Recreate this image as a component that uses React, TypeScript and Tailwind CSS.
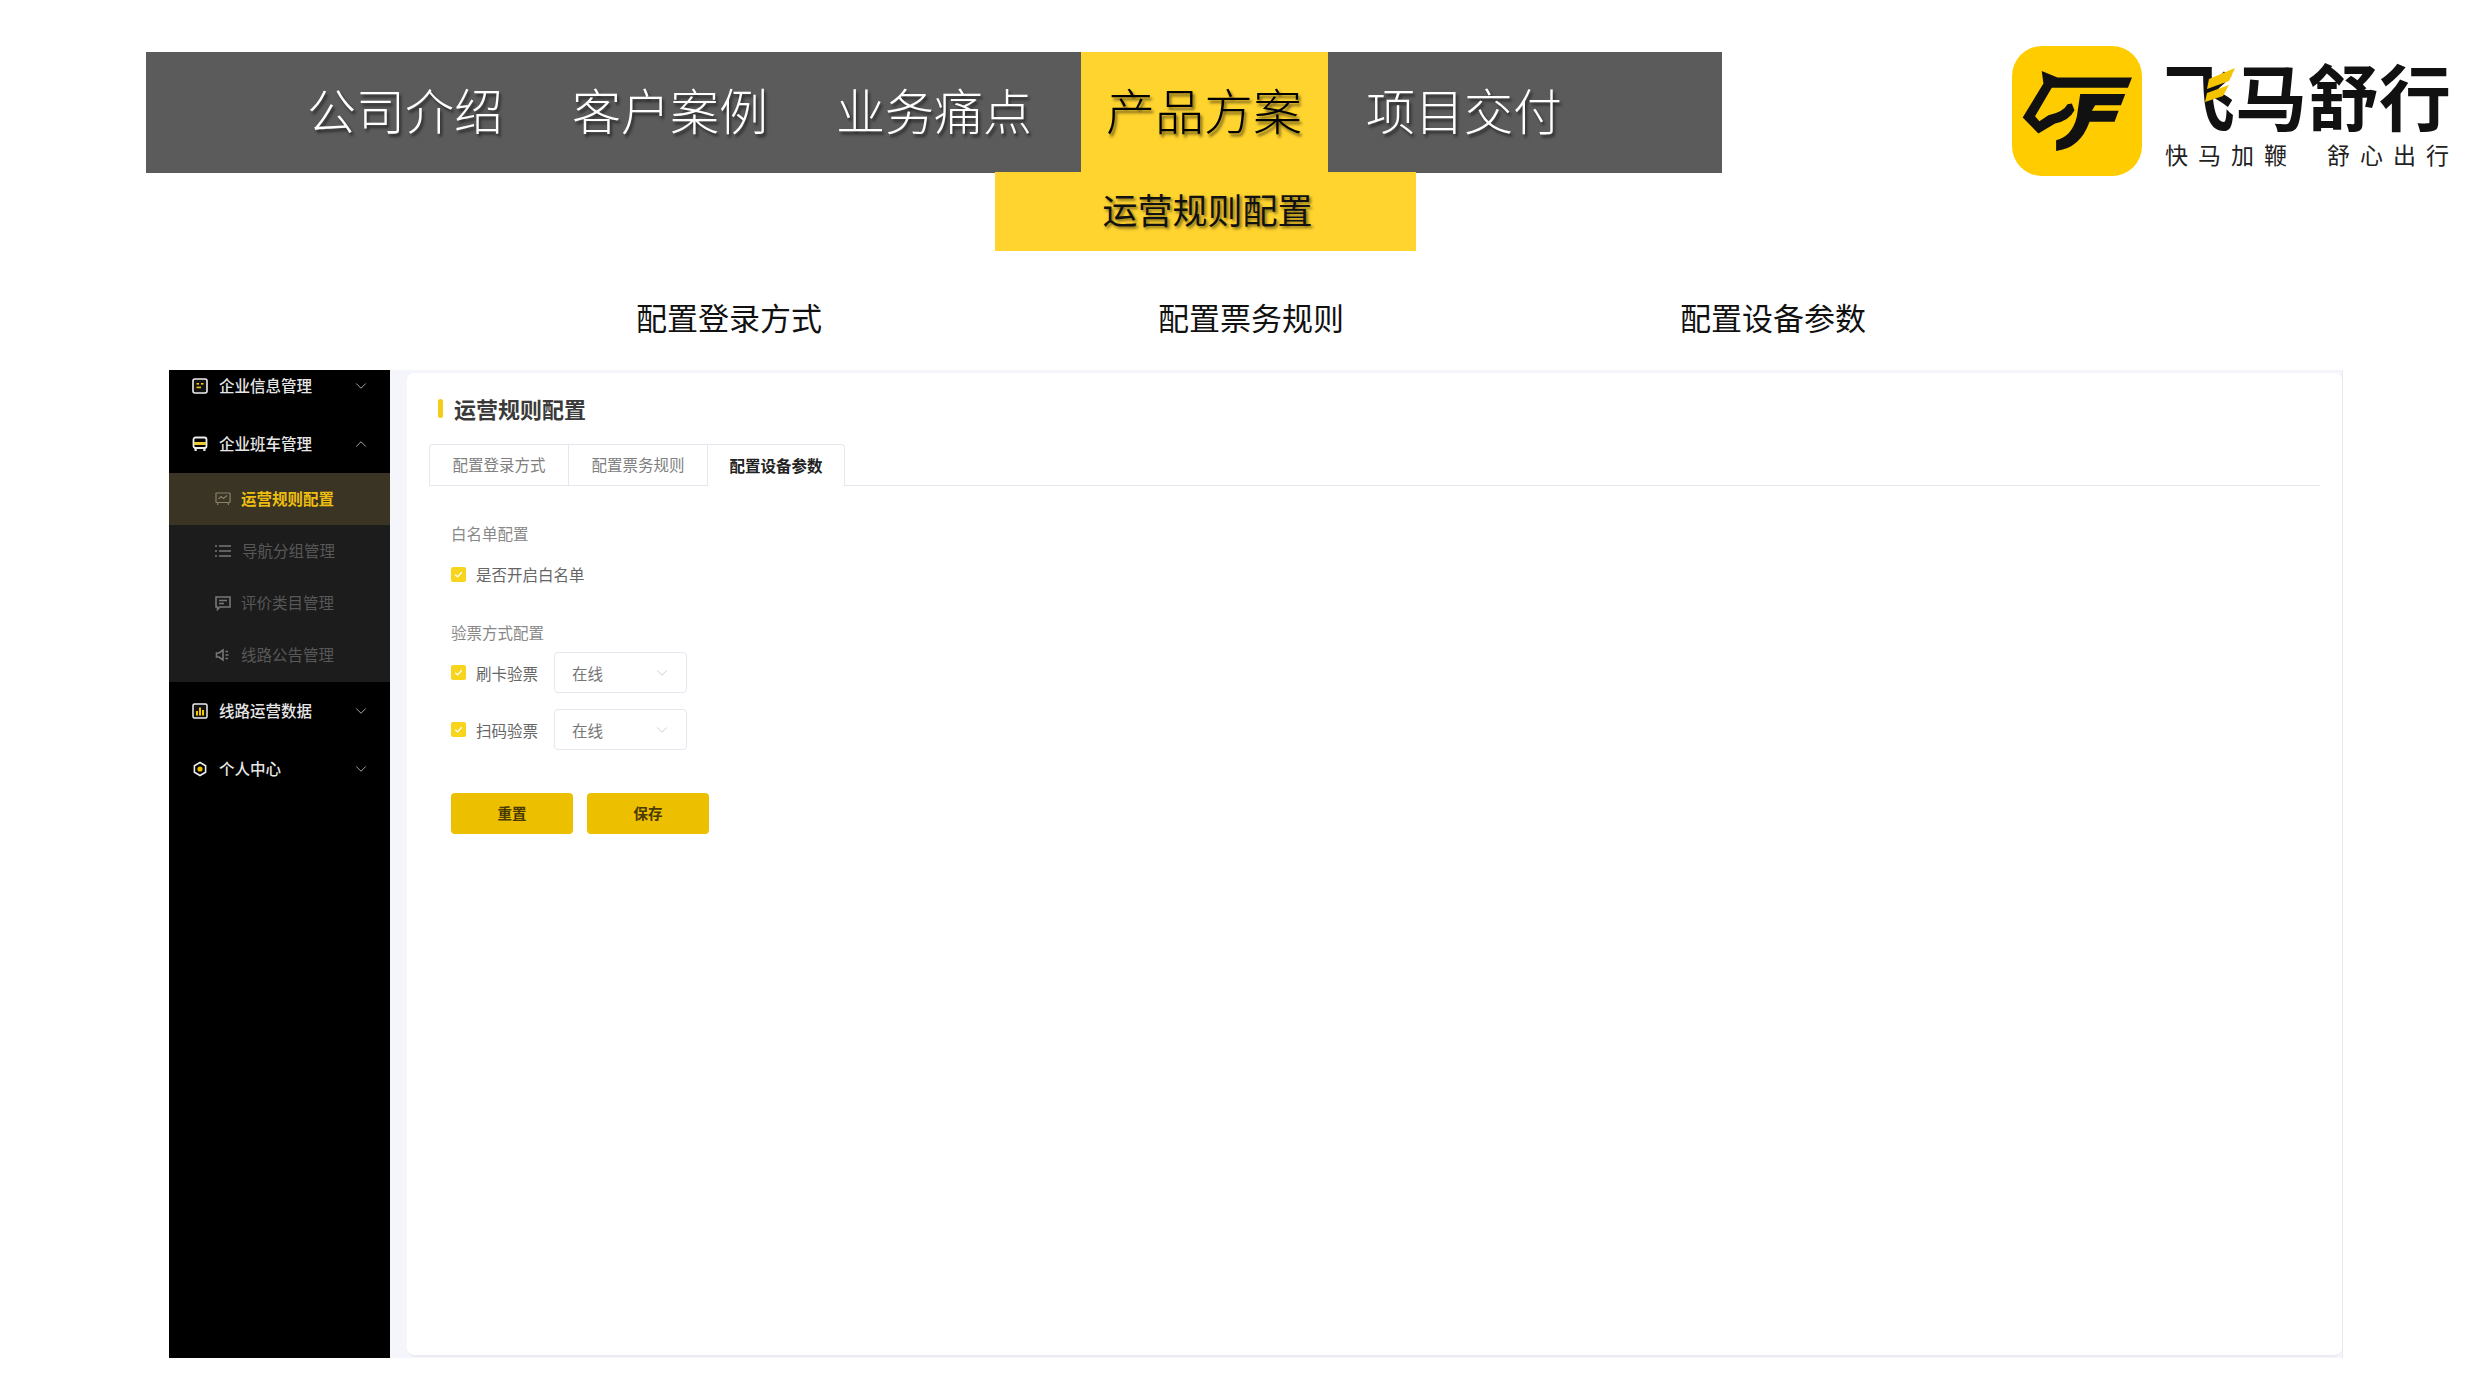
import { ChevronDown, ChevronUp } from 'lucide-react'
import type { ReactNode } from 'react'

const navItems = [
  { label: '公司介绍', className: 'pl-[161px] pr-[35px] text-white [text-shadow:2px_3px_3px_rgba(0,0,0,0.55)]' },
  { label: '客户案例', className: 'pl-[34px] pr-[34px] text-white [text-shadow:2px_3px_3px_rgba(0,0,0,0.55)]' },
  { label: '业务痛点', className: 'pl-[34px] pr-[49px] text-white [text-shadow:2px_3px_3px_rgba(0,0,0,0.55)]' },
  { label: '产品方案', className: 'pl-[25px] pr-[26px] bg-[#ffd42f] text-black [text-shadow:2px_3px_3px_rgba(0,0,0,0.55)]' },
  { label: '项目交付', className: 'pl-[38px] pr-[38px] text-white [text-shadow:2px_3px_3px_rgba(0,0,0,0.55)]' },
]

const BoxIcon = () => (
  <svg viewBox="0 0 16 16" className="h-4 w-4">
    <rect x="1" y="1" width="14" height="14" rx="2" fill="#111" stroke="#eee" strokeWidth="1.6" />
    <rect x="4.5" y="5" width="2.5" height="1.6" fill="#f5c800" />
    <rect x="9" y="5" width="2.5" height="1.6" fill="#f5c800" />
    <rect x="4.5" y="8.6" width="4.5" height="1.6" fill="#f5c800" />
  </svg>
)

const BusIcon = () => (
  <svg viewBox="0 0 16 16" className="h-4 w-4">
    <rect x="1.5" y="1.5" width="13" height="10.5" rx="2" fill="none" stroke="#eee" strokeWidth="1.8" />
    <rect x="2" y="6" width="12" height="3" fill="#eccb3a" />
    <rect x="2.5" y="12" width="2.2" height="3" fill="#eee" />
    <rect x="11.3" y="12" width="2.2" height="3" fill="#eee" />
  </svg>
)

const ChartIcon = () => (
  <svg viewBox="0 0 16 16" className="h-4 w-4">
    <rect x="1" y="1" width="14" height="14" rx="1.5" fill="#111" stroke="#eee" strokeWidth="1.5" />
    <rect x="4" y="8" width="2" height="4.5" fill="#f5c800" />
    <rect x="7" y="4.5" width="2" height="8" fill="#f5c800" />
    <rect x="10" y="7" width="2" height="5.5" fill="#f5c800" />
  </svg>
)

const HexIcon = () => (
  <svg viewBox="0 0 16 16" className="h-4 w-4">
    <path d="M8 1.5 13.6 4.7V11.3L8 14.5 2.4 11.3V4.7Z" fill="none" stroke="#eee" strokeWidth="1.6" />
    <circle cx="8" cy="8" r="2.6" fill="#e8c000" />
  </svg>
)

const BoardIcon = () => (
  <svg viewBox="0 0 16 16" className="h-4 w-4" fill="none" stroke="#8a8268" strokeWidth="1.2">
    <rect x="1" y="2" width="14" height="9.5" rx="0.5" />
    <path d="M3.5 8 6 5.5 8.5 7.5 12 4.5" />
    <path d="M3 11.5 2.5 14M13 11.5 13.5 14" />
  </svg>
)

const ListIcon = () => (
  <svg viewBox="0 0 18 16" className="-ml-[1px] h-4 w-[18px]" fill="none" stroke="#777" strokeWidth="1.5">
    <path d="M5 3h12M5 8h12M5 13h12" />
    <path d="M1 3h2M1 8h2M1 13h2" />
  </svg>
)

const CommentIcon = () => (
  <svg viewBox="0 0 16 16" className="h-4 w-4" fill="none" stroke="#777" strokeWidth="1.6">
    <path d="M1 2h14v10H5l-2.5 2.4V12H1Z" />
    <path d="M4 5.5h8M4 8.5h5" />
  </svg>
)

const SpeakerIcon = () => (
  <svg viewBox="0 0 16 16" className="h-4 w-4" fill="none" stroke="#777" strokeWidth="1.6">
    <path d="M1.5 6h2.5L8 3v10L4 10H1.5Z" />
    <path d="M10.5 4.5h2.5M10.5 8h3M10.5 11.5h2.5" />
  </svg>
)

const MenuRow = ({ icon, label, open }: { icon: ReactNode; label: string; open?: boolean }) => (
  <div className="flex h-[58px] shrink-0 items-center pl-[23px] pr-[20px] text-[15.5px] font-medium text-[#e6e6e6]">
    {icon}
    <span className="ml-[11px] flex-1">{label}</span>
    {open ? (
      <ChevronUp className="h-[18px] w-[18px] text-[#aaa]" strokeWidth={1.3} />
    ) : (
      <ChevronDown className="h-[18px] w-[18px] text-[#aaa]" strokeWidth={1.3} />
    )}
  </div>
)

const SubRow = ({ icon, label, active }: { icon: ReactNode; label: string; active?: boolean }) => (
  <div
    className={
      active
        ? 'flex h-[52px] items-center bg-[#3a3425] pl-[46px] text-[15.5px] font-bold text-[#eebf0e]'
        : 'flex h-[52px] items-center pl-[46px] text-[15.5px] text-[#585858]'
    }
  >
    {icon}
    <span className="ml-[10px]">{label}</span>
  </div>
)

const Sidebar = () => (
  <aside className="flex h-full w-[221px] shrink-0 flex-col overflow-hidden bg-black">
    <div className="-mt-[13px]">
      <MenuRow icon={<BoxIcon />} label="企业信息管理" />
    </div>
    <MenuRow icon={<BusIcon />} label="企业班车管理" open />
    <div className="bg-[#1c1c1c] pb-[1px]">
      <SubRow icon={<BoardIcon />} label="运营规则配置" active />
      <SubRow icon={<ListIcon />} label="导航分组管理" />
      <SubRow icon={<CommentIcon />} label="评价类目管理" />
      <SubRow icon={<SpeakerIcon />} label="线路公告管理" />
    </div>
    <MenuRow icon={<ChartIcon />} label="线路运营数据" />
    <MenuRow icon={<HexIcon />} label="个人中心" />
  </aside>
)

const Check = () => (
  <span className="flex h-[15px] w-[15px] items-center justify-center rounded-[2px] bg-[#f8d41c]">
    <svg viewBox="0 0 12 12" className="h-[11px] w-[11px]" fill="none" stroke="#fff" strokeWidth="1.5">
      <path d="M2.5 6.2 5 8.6 9.5 3.6" />
    </svg>
  </span>
)

const SelectBox = () => (
  <div className="ml-[16px] flex h-[41px] w-[133px] items-center justify-between rounded-[4px] border border-[#e4e7ed] pl-[17px] pr-[15px] text-[15.5px] text-[#777]">
    <span>在线</span>
    <ChevronDown className="h-[18px] w-[18px] text-[#c0c4cc]" strokeWidth={1.1} />
  </div>
)

const ConfigCard = () => (
  <div className="flex h-full flex-col rounded-[8px] border-b-2 border-[#ececf0] bg-white pl-[22px] pr-[22px]">
    <div className="ml-[9px] mt-[25px] flex h-[20px] items-center">
      <span className="h-[19px] w-[5px] rounded-full bg-[#f5cc17]" />
      <h1 className="ml-[11px] text-[22px] font-bold text-[#3a3a3a]">运营规则配置</h1>
    </div>
    <div className="mt-[26px] flex h-[42px] border-b border-[#e4e7ed] text-[15.5px]">
      <div className="flex w-[139px] items-center justify-center rounded-tl-[4px] border-l border-t border-[#e4e7ed] text-[#808080]">配置登录方式</div>
      <div className="flex w-[139px] items-center justify-center border-l border-t border-[#e4e7ed] text-[#808080]">配置票务规则</div>
      <div className="-mb-px flex w-[138px] items-center justify-center rounded-tr-[4px] border-x border-t border-[#e4e7ed] bg-white font-bold text-[#222]">配置设备参数</div>
    </div>
    <div className="ml-[22px] text-[15.5px] leading-[20px]">
      <div className="mt-[37px] text-[#888]">白名单配置</div>
      <div className="mt-[21px] flex items-center text-[#666]">
        <Check />
        <span className="ml-[10px]">是否开启白名单</span>
      </div>
      <div className="mt-[38px] text-[#888]">验票方式配置</div>
      <div className="mt-[10px] flex items-center text-[#666]">
        <Check />
        <span className="ml-[10px]">刷卡验票</span>
        <SelectBox />
      </div>
      <div className="mt-[16px] flex items-center text-[#666]">
        <Check />
        <span className="ml-[10px]">扫码验票</span>
        <SelectBox />
      </div>
      <div className="mt-[43px] flex gap-[14px] font-medium text-[#4a3a00]">
        <button className="h-[41px] w-[122px] rounded-[4px] bg-[#ecbf00] pb-[1px] text-[14.5px] font-bold">重置</button>
        <button className="h-[41px] w-[122px] rounded-[4px] bg-[#ecbf00] pb-[1px] text-[14.5px] font-bold">保存</button>
      </div>
    </div>
  </div>
)

const Logo = () => (
  <div className="flex">
    <svg viewBox="96 78 389 389" className="h-[130px] w-[130px] shrink-0">
      <rect x="96" y="78" width="389" height="389" rx="90" fill="#ffcc00" />
      <path
        d="M185 153 232 172H455L443 203H215L165 288 178 303 205 285Q250 275 262 252L275 250 283 270Q268 300 225 310L175 340 128 292 190 190Z"
        fill="#111"
      />
      <path d="M300 222H435L422 255H345L335 272H415L403 305H328Q300 385 228 392V360Q275 350 290 290Z" fill="#111" />
    </svg>
    <div className="relative ml-[21px] flex flex-col">
      <div className="mt-[5px] h-[85px] text-[72px] font-bold leading-[85px] text-[#111]">飞马舒行</div>
      <svg viewBox="0 0 30 40" className="absolute left-[42px] top-[22px] h-[40px] w-[30px]">
        <path d="M4 11 30 0 24 13 2 21ZM2 25 24 17 18 28 0 34Z" fill="#f5c400" />
      </svg>
      <div className="mt-[4px] flex gap-[30px] pl-[2px] text-[23px] leading-[28px] tracking-[10px] text-[#222]">
        <span>快马加鞭</span>
        <span>舒心出行</span>
      </div>
    </div>
  </div>
)

export default function App() {
  return (
    <div className="h-[1395px] w-[2481px] overflow-hidden bg-white font-['Noto_Sans_CJK_SC',sans-serif]">
      <header className="flex pt-[46px]">
        <div className="ml-[146px] mt-[6px] w-[1576px]">
          <nav className="flex h-[121px] items-stretch bg-[#5b5b5b] text-[49px] font-light">
            {navItems.map((item) => (
              <a key={item.label} href="#" className={`flex items-center pb-[7px] ${item.className}`}>
                {item.label}
              </a>
            ))}
          </nav>
          <div className="-mt-px ml-[849px] flex h-[79px] w-[421px] items-center justify-center bg-[#ffd42f] pb-[4px] pl-[4px] text-[35px] text-[#111] [text-shadow:2px_2px_3px_rgba(0,0,0,0.5)]">
            运营规则配置
          </div>
        </div>
        <div className="ml-[290px]">
          <Logo />
        </div>
      </header>

      <div className="flex h-[119px] items-center gap-[336px] pl-[636px] pt-[14px] text-[31px] text-[#111]">
        <span>配置登录方式</span>
        <span>配置票务规则</span>
        <span>配置设备参数</span>
      </div>

      <section className="ml-[169px] flex h-[988px] w-[2174px]">
        <Sidebar />
        <main className="flex-1 border-r border-[#e8e8ee] bg-[#f4f6fc] pb-[1px] pl-[17px] pt-[3px]">
          <ConfigCard />
        </main>
      </section>
    </div>
  )
}
